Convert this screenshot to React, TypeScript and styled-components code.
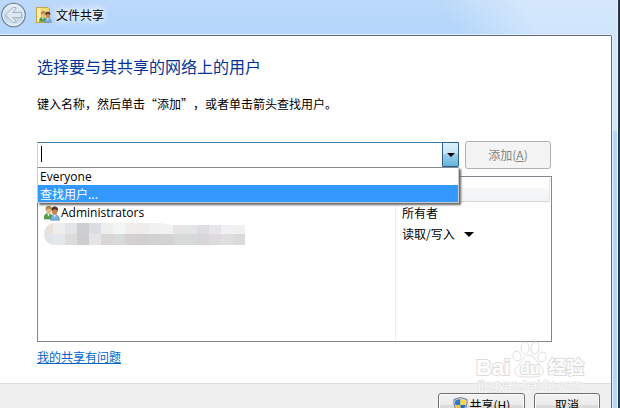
import React from 'react';
import styled, { createGlobalStyle } from 'styled-components';

const cjk = '"Noto Sans CJK SC", "Noto Sans", sans-serif';
const latin = '"Open Sans", "Noto Sans CJK SC", sans-serif';

const GlobalStyle = createGlobalStyle`
  *, *::before, *::after { box-sizing: border-box; }
  body { margin: 0; overflow: hidden; background: #2c3742; }
  button, input { font: inherit; color: inherit; margin: 0; }
`;

const Window = styled.div`
  position: relative;
  display: flex;
  flex-direction: column;
  height: 100vh;
  overflow: hidden;
  margin-right: 2px;
  padding-right: 5px;
  border-right: 1px solid #eaf4ff;
  font: 12px/16px ${cjk};
  color: #000;
  background:
    linear-gradient(60deg, transparent 74%, rgba(255, 255, 255, 0.38) 86%) top / 100% 131px no-repeat,
    linear-gradient(#bbd9fa, #b3d6fb 36px, #b5d7fb);
`;

const TitleBar = styled.header`
  display: flex;
  align-items: center;
  flex: none;
  height: 35px;
  padding: 0 0 5px 1px;
`;

const BackButton = styled.button`
  display: block;
  width: 26px;
  height: 26px;
  padding: 0;
  border: 0;
  background: none;
`;

const TitleIcon = styled.svg`
  width: 16px;
  height: 16px;
  margin: 0 4px 0 9px;
`;

const Title = styled.h1`
  margin: 0;
  font-size: 12px;
  font-weight: 400;
  text-shadow: 0 0 6px #fff, 0 0 8px #fff, 0 0 10px #fff;
`;

const Client = styled.div`
  display: flex;
  flex-direction: column;
  flex: 1 0 auto;
  background: #fff;
  border-top: 1px solid #5d6878;
  border-right: 1px solid #5d6878;
  border-top-right-radius: 2px;
  box-shadow: 0 0 0 1px #e4f1ff;
`;

const Main = styled.main`
  padding: 18px 59px 18px 37px;
`;

const Heading = styled.h2`
  margin: 0;
  font-size: 16px;
  line-height: 24px;
  font-weight: 400;
  color: #003399;
`;

const Hint = styled.p`
  margin: 18px 0 29px;
  text-spacing-trim: space-all;
`;

const AddRow = styled.div`
  display: flex;
  align-items: center;
  gap: 6px;
  padding-right: 1px;
`;

const Combo = styled.div`
  position: relative;
  display: flex;
  flex: 1;
  height: 26px;
  border: 1px solid #b7d9ed;
  border-top-color: #3d7bad;
  background: #fff;
`;

const Caret = styled.span`
  width: 1px;
  height: 16px;
  margin: 3px 0 0 3px;
  background: #000;
`;

const ComboInput = styled.input`
  flex: 1;
  min-width: 0;
  padding: 0 2px;
  border: 0;
  outline: 0;
  background: transparent;
  caret-color: transparent;
`;

const ComboArrow = styled.button`
  display: flex;
  align-items: center;
  justify-content: center;
  width: 17px;
  margin: -1px -1px 0 0;
  padding: 0;
  border: 1px solid #2c628b;
  border-radius: 0 2px 2px 0;
  background: linear-gradient(#e0f1fa, #c4e3f4 48%, #98cfed 50%, #68b3db);
`;

const Options = styled.ul`
  position: absolute;
  z-index: 1;
  top: 24px;
  left: -1px;
  right: -1px;
  margin: 0;
  padding: 0;
  list-style: none;
  border: 1px solid #858b94;
  border-left-color: #c9cdd2;
  border-right-color: #c9cdd2;
  border-bottom-color: #c9cdd2;
  background: #fff;
  box-shadow: 2px 2px 2px #666;
`;

const Option = styled.li<{ $active?: boolean }>`
  height: 17px;
  padding: 0 2px;
  line-height: 17px;
  font-family: ${({ $active }) => ($active ? cjk : latin)};
  color: ${({ $active }) => ($active ? '#fff' : '#000')};
  background: ${({ $active }) => ($active ? '#3399ff' : '#fff')};
`;

const AddButton = styled.button`
  width: 86px;
  height: 28px;
  padding: 0;
  border: 1px solid #adb2b5;
  border-radius: 3px;
  background: #f4f4f4;

  &:disabled { color: #838383; }
`;

const ListBox = styled.div`
  height: 166px;
  margin: 7px 0;
  padding: 1px;
  border: 1px solid #828790;
`;

const Table = styled.table`
  width: 100%;
  height: 100%;
  border-collapse: separate;
  border-spacing: 0;
  table-layout: fixed;
`;

const HeadCell = styled.th<{ $width?: number }>`
  width: ${({ $width }) => ($width ? `${$width}px` : 'auto')};
  height: 24px;
  padding: 0;
  border-right: 1px solid #e2e4e7;
  border-bottom: 1px solid #d5d5d5;
  background: linear-gradient(#fff 40%, #f7f8fa 42%, #f1f2f4);
`;

const Cell = styled.td<{ $fill?: boolean }>`
  height: ${({ $fill }) => ($fill ? 'auto' : '21px')};
  padding: 0 0 0 5px;
  vertical-align: middle;

  & + & {
    padding-left: 6px;
    border-left: 1px solid #e6f0fa;
  }
`;

const UserName = styled.span`
  display: flex;
  align-items: center;
  gap: 1px;
  font-family: ${latin};
`;

const Masked = styled.svg`
  display: block;
  width: 201px;
  height: 22px;
`;

const Permission = styled.button`
  display: flex;
  align-items: center;
  gap: 9px;
  padding: 0;
  border: 0;
  background: none;
`;

const HelpLink = styled.a`
  display: table;
  color: #0066cc;
  text-decoration: underline;
`;

const Footer = styled.footer`
  display: flex;
  flex: 1;
  justify-content: flex-end;
  align-items: flex-start;
  gap: 9px;
  padding: 9px 11px 12px;
  border-top: 1px solid #dfdfdf;
  background: #f0f0f0;
`;

const ActionButton = styled.button<{ $width: number }>`
  display: flex;
  align-items: center;
  justify-content: center;
  gap: 2px;
  width: ${({ $width }) => $width}px;
  height: 24px;
  padding: 0;
  border: 1px solid #707070;
  border-radius: 3px;
  box-shadow: inset 0 0 0 1px #fcfcfc;
  background: linear-gradient(#f2f2f2, #ebebeb 50%, #dddddd 50%, #cfcfcf);
`;

const Watermark = styled.svg`
  position: absolute;
  right: 28px;
  bottom: 12px;
  width: 114px;
  height: 56px;
  pointer-events: none;
`;

const DownTriangle = ({ width, height }: { width: number; height: number }) => (
  <svg width={width} height={height} viewBox="0 0 10 5" preserveAspectRatio="none" aria-hidden="true">
    <path d="M0 0h10L5 5z" fill="#000" />
  </svg>
);

const BackIcon = () => (
  <svg width="26" height="26" viewBox="0 0 26 26" aria-hidden="true">
    <defs>
      <linearGradient id="orb" x1="0" y1="0" x2="0" y2="1">
        <stop offset="0" stopColor="#e6eff8" />
        <stop offset=".48" stopColor="#cfdfee" />
        <stop offset=".52" stopColor="#b9cfe3" />
        <stop offset="1" stopColor="#dcecf9" />
      </linearGradient>
    </defs>
    <circle cx="12.5" cy="13" r="11.7" fill="url(#orb)" stroke="#75859a" strokeWidth="1.3" />
    <circle cx="12.5" cy="13" r="10.5" fill="none" stroke="#eff6fc" />
    <path
      d="M4.500 13l7.500-7.500h3v1.500l-3.500 3.500H20.500v5H11.500l3.500 3.500v1.500h-3z"
      fill="#dfe9f3"
      stroke="#a3b4c5"
      strokeLinejoin="round"
    />
  </svg>
);

const People = () => (
  <>
    <path d="M0 14c0-4 1.500-5.500 4-5.500S8.500 10 9 14z" fill="#55a046" stroke="#397c35" strokeWidth=".6" />
    <path d="M3 8.500l1.500 3L6 8.500z" fill="#edf5dd" />
    <ellipse cx="4.800" cy="5" rx="2.600" ry="3.500" fill="#e7b982" />
    <path d="M2 6C1 2.500 2.500.8 4.800.8s3.500 1.500 2.800 3.400C6 4.500 4.500 3.500 3.500 3.600z" fill="#a9854a" />
    <path d="M6.500 15.200c0-4 1.500-5.500 4.200-5.500s4.500 1.500 4.800 5.500z" fill="#7bafe0" stroke="#457eb4" strokeWidth=".6" />
    <path d="M9.300 9.800l1.400 2.700L12 9.800z" fill="#eef6ff" />
    <ellipse cx="10.700" cy="6.200" rx="2.800" ry="3.500" fill="#c98556" />
    <path d="M7.700 6C7 3 8.300 1.500 10.700 1.500s4 1.600 3 4.800c-1-1.500-2-2-3.500-2z" fill="#493329" />
  </>
);

const ShieldIcon = () => (
  <svg width="15" height="16" viewBox="0 0 15 16" aria-hidden="true">
    <path d="M7.500.5L14 2.500c.6 6-1.500 10.500-6.500 13C2.500 13 .4 8.500 1 2.500z" fill="#d5dce5" stroke="#66758a" />
    <path d="M7.500 2v6H2.300C2 6.500 2 5 2.200 3.600z" fill="#2d78d3" />
    <path d="M7.500 2v6h5.200c.3-1.500.3-3 .1-4.400z" fill="#ffd63b" />
    <path d="M7.500 8v6.200C4.800 12.700 3 10.700 2.300 8z" fill="#f7c42d" />
    <path d="M7.500 8v6.200c2.700-1.500 4.500-3.500 5.200-6.200z" fill="#2568bf" />
  </svg>
);

const maskTop = ['#e8e2de', '#f0eeed', '#e3e4e6', '#cecfd2', '#dcdde0', '#edeeee', '#f4f6f5', '#f0eeed', '#efecec', '#f1f1f1', '#f2f2f2', '#e6e4e4', '#e3e6e8', '#dddcde', '#e8e6e8', '#f0f1f4', '#f1f0ef', '#f2f4f3'];
const maskBottom = ['#dfe3ea', '#e5e8eb', '#dcdbda', '#cdcdd0', '#e4e4e7', '#d9d6d5', '#d7dada', '#d3d0cf', '#d0d0d1', '#d1d2d1', '#d4d3d1', '#d7d9d9', '#d5d9da', '#d7d5d7', '#dcdadc', '#dfdfe2', '#dadada', '#dddbe1'];

const MaskedUser = () => (
  <Masked viewBox="0 0 201 22" role="img" aria-label="用户">
    <defs>
      <clipPath id="maskShape">
        <path d="M11 0H116l12 2h73v20H11C4 22 0 17 0 11S4 0 11 0z" />
      </clipPath>
    </defs>
    <g clipPath="url(#maskShape)" shapeRendering="crispEdges">
      {maskTop.map((fill, i) => (
        <rect key={i} x={i * 12 - 3} y="0" width="12" height="11" fill={fill} />
      ))}
      {maskBottom.map((fill, i) => (
        <rect key={i} x={i * 12 - 3} y="11" width="12" height="11" fill={fill} />
      ))}
    </g>
  </Masked>
);

const BaiduMark = () => (
  <Watermark viewBox="0 0 114 56" aria-hidden="true">
    <g fill="#fff" fillOpacity=".8" stroke="#dfdfdf" strokeWidth="1">
      <ellipse cx="42" cy="16" rx="4" ry="5" transform="rotate(-20 42 16)" />
      <ellipse cx="50" cy="8" rx="4" ry="6" />
      <ellipse cx="60" cy="8" rx="4" ry="6" transform="rotate(10 60 8)" />
      <ellipse cx="67" cy="17" rx="4" ry="5" transform="rotate(20 67 17)" />
      <path d="M54 15c5 0 6 5 9 8 4 4 6 6 5 9-1 5-6 5-14 5s-13 0-14-5c-1-3 2-5 5-9 3-3 4-8 9-8z" />
    </g>
    <g fill="#fff" stroke="#dcdcdc" strokeWidth="2" paintOrder="stroke" fontWeight="700">
      <text x="1" y="35" fontFamily="Liberation Sans" fontSize="22">Bai</text>
      <text x="45" y="34" fontFamily="Liberation Sans" fontSize="16">du</text>
      <text x="73" y="34" fontFamily="Noto Sans CJK SC" fontSize="18">经验</text>
    </g>
    <text
      x="3"
      y="49"
      fontFamily="Liberation Sans"
      fontSize="13"
      fill="#fafafa"
      stroke="#dedede"
      strokeWidth="1"
      paintOrder="stroke"
    >
      jingyan.baidu.com
    </text>
  </Watermark>
);

export default function App() {
  return (
    <>
      <GlobalStyle />
      <Window>
        <TitleBar>
          <BackButton type="button" aria-label="返回"><BackIcon /></BackButton>
          <TitleIcon viewBox="0 0 16 16" aria-hidden="true">
            <path d="M.5.5H12l1.500 1.500v13.500H.5z" fill="#f5db78" stroke="#c7a64b" />
            <path d="M1.500 1.500h3v13h-3z" fill="#fff0ab" />
            <g transform="translate(3.500 3.500) scale(.78)"><People /></g>
          </TitleIcon>
          <Title>文件共享</Title>
        </TitleBar>
        <Client>
          <Main>
            <Heading>选择要与其共享的网络上的用户</Heading>
            <Hint>键入名称，然后单击“添加”，或者单击箭头查找用户。</Hint>
            <AddRow>
              <Combo>
                <Caret />
                <ComboInput
                  type="text"
                  role="combobox"
                  aria-label="用户名称"
                  aria-expanded="true"
                  aria-controls="user-options"
                />
                <ComboArrow type="button" aria-label="显示用户列表">
                  <DownTriangle width={8} height={4} />
                </ComboArrow>
                <Options id="user-options" role="listbox">
                  <Option role="option" aria-selected="false">Everyone</Option>
                  <Option role="option" aria-selected="true" $active>查找用户...</Option>
                </Options>
              </Combo>
              <AddButton type="button" disabled>添加(<u>A</u>)</AddButton>
            </AddRow>
            <ListBox>
              <Table>
                <thead>
                  <tr>
                    <HeadCell scope="col" aria-label="名称" />
                    <HeadCell scope="col" aria-label="权限级别" $width={155} />
                  </tr>
                </thead>
                <tbody>
                  <tr>
                    <Cell>
                      <UserName>
                        <svg width="16" height="16" viewBox="0 0 16 16" aria-hidden="true"><People /></svg>
                        Administrators
                      </UserName>
                    </Cell>
                    <Cell>所有者</Cell>
                  </tr>
                  <tr>
                    <Cell><MaskedUser /></Cell>
                    <Cell>
                      <Permission type="button" aria-haspopup="menu">
                        读取/写入
                        <DownTriangle width={10} height={5} />
                      </Permission>
                    </Cell>
                  </tr>
                  <tr>
                    <Cell $fill />
                    <Cell $fill />
                  </tr>
                </tbody>
              </Table>
            </ListBox>
            <HelpLink href="#help">我的共享有问题</HelpLink>
          </Main>
          <Footer>
            <ActionButton type="button" $width={87}><ShieldIcon />共享(H)</ActionButton>
            <ActionButton type="button" $width={66}>取消</ActionButton>
          </Footer>
        </Client>
        <BaiduMark />
      </Window>
    </>
  );
}
